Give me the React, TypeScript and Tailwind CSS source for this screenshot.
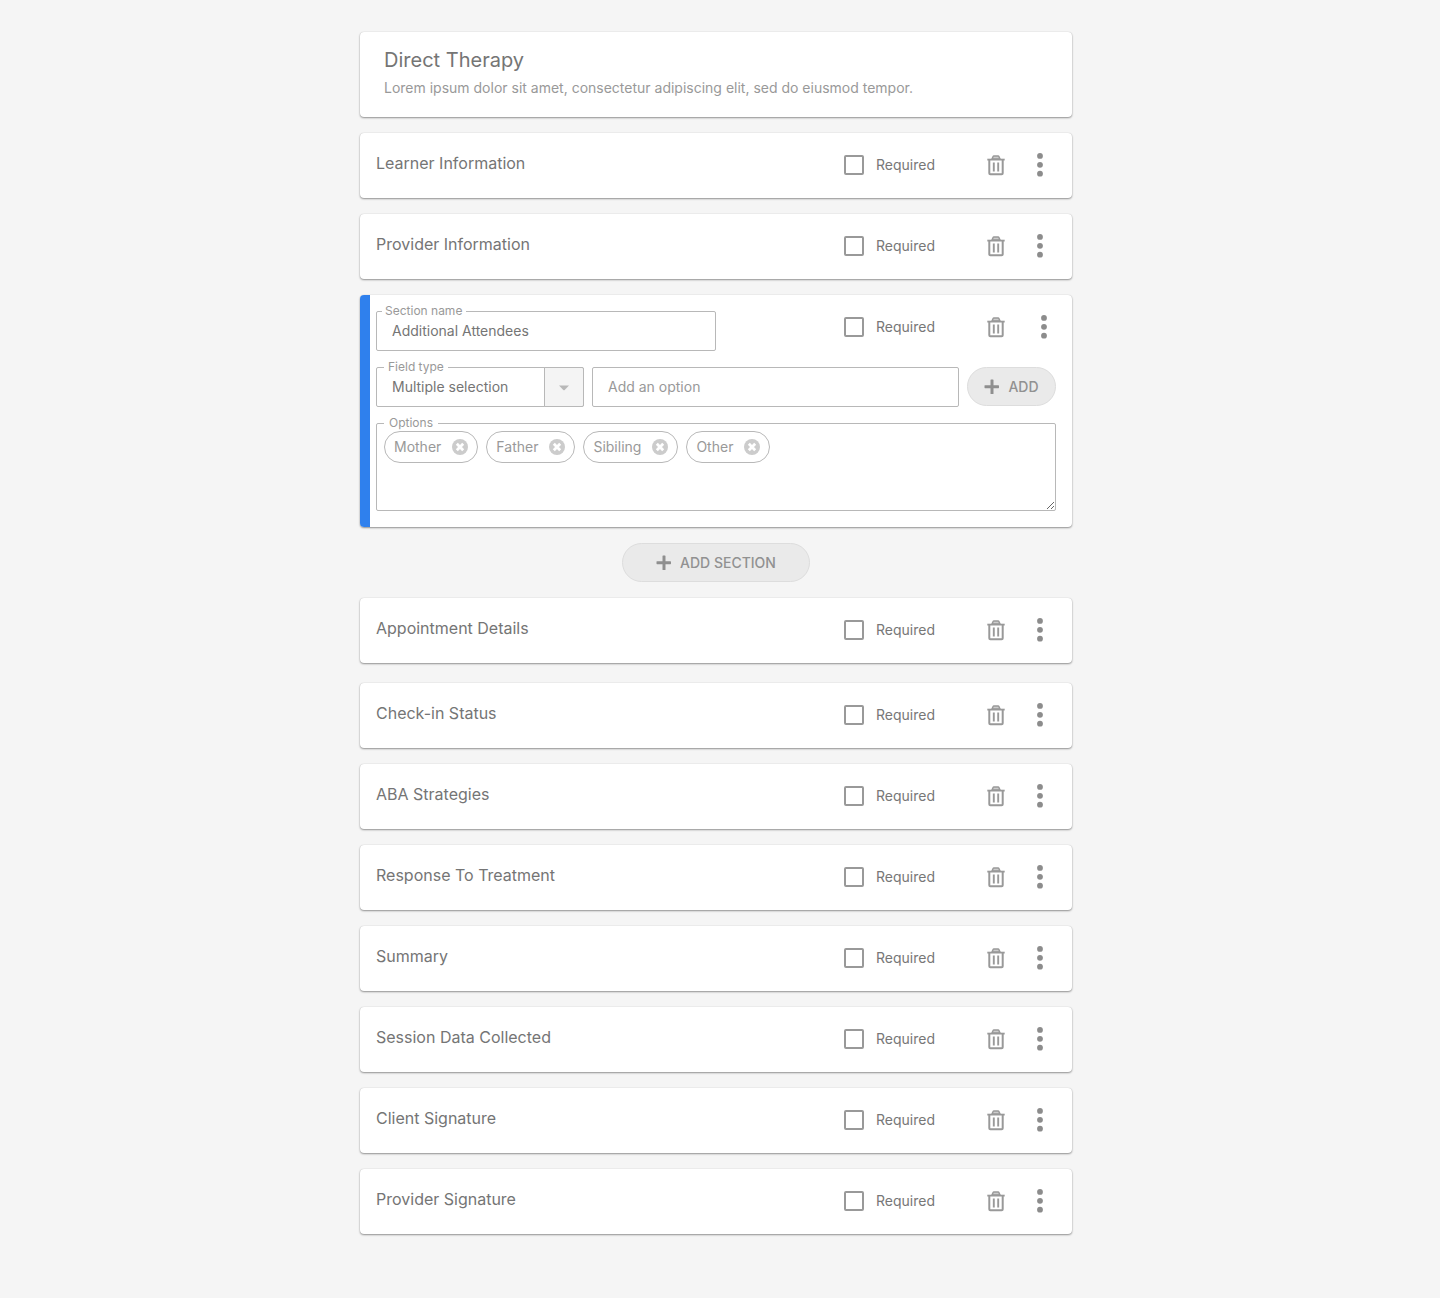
import { useState } from "react";

type SectionCardProps = {
  title: string;
};

const sectionsBefore = ["Learner Information", "Provider Information"];

const sectionsAfter = [
  "Check-in Status",
  "ABA Strategies",
  "Response To Treatment",
  "Summary",
  "Session Data Collected",
  "Client Signature",
  "Provider Signature",
];

function TrashIcon() {
  return (
    <svg viewBox="0 0 24 24" className="size-6" fill="none" stroke="#999999" aria-hidden="true">
      <path d="M8 6 9 3.8q.3-.7 1-.7h4q.7 0 1 .7L16 6z" fill="#cccccc" strokeWidth="1.5" />
      <path d="M3.3 6.6h17.4" strokeWidth="1.8" />
      <path d="M5.3 6.600v13.700q0 1 1 1h11.400q1 0 1-1V6.600" strokeWidth="2" />
      <path d="M9.800 9.400v9.200M14.200 9.400v9.200" strokeWidth="1.900" />
    </svg>
  );
}

function DotsIcon() {
  return (
    <svg viewBox="0 0 24 24" className="size-6" fill="#8c8c8c" aria-hidden="true">
      <circle cx="12" cy="2.900" r="2.900" />
      <circle cx="12" cy="11.800" r="2.900" />
      <circle cx="12" cy="20.700" r="2.900" />
    </svg>
  );
}

function PlusIcon() {
  return (
    <svg viewBox="0 0 16 16" className="size-4" fill="#8f8f8f" aria-hidden="true">
      <rect x="6.5" y="0.500" width="3" height="14.500" rx="0.600" />
      <rect x="0.500" y="6.200" width="14.500" height="3" rx="0.600" />
    </svg>
  );
}

function RemoveIcon() {
  return (
    <svg viewBox="0 0 16 16" className="size-4" aria-hidden="true">
      <circle cx="8" cy="8" r="8" fill="#cccccc" />
      <path d="m4.800 4.800 6.400 6.400M11.200 4.800l-6.400 6.400" stroke="#ffffff" strokeWidth="2.800" />
    </svg>
  );
}

function RequiredCheckbox() {
  return (
    <label className="flex w-[140px] items-center gap-3 text-sm text-[#777777]">
      <input
        type="checkbox"
        className="size-5 appearance-none rounded-xs border-2 border-[#999999] bg-white checked:bg-[#2f80ed]"
      />
      Required
    </label>
  );
}

function SectionCard({ title }: SectionCardProps) {
  return (
    <section className="flex min-h-[65px] items-start justify-between rounded bg-white py-4 pr-5 pl-4 shadow-[0_1px_2px_rgba(0,0,0,0.4),0_0_1px_rgba(0,0,0,0.2)]">
      <h2 className="text-base leading-7 text-[#757575]">{title}</h2>
      <div className="flex h-8 items-center">
        <RequiredCheckbox />
        <button type="button" aria-label={`Delete ${title}`} className="mr-5">
          <TrashIcon />
        </button>
        <button type="button" aria-label={`More actions for ${title}`}>
          <DotsIcon />
        </button>
      </div>
    </section>
  );
}

function SectionEditor() {
  const [options, setOptions] = useState(["Mother", "Father", "Sibiling", "Other"]);
  const [draft, setDraft] = useState("");

  const addOption = () => {
    if (!draft.trim()) return;
    setOptions([...options, draft.trim()]);
    setDraft("");
  };

  return (
    <section className="flex rounded bg-white shadow-[0_1px_2px_rgba(0,0,0,0.4),0_0_1px_rgba(0,0,0,0.2)]">
      <div className="w-2.5 shrink-0 rounded-l bg-[#2f80ed]" />
      <div className="flex grow flex-col gap-4 py-4 pr-4 pl-1.5">
        <div className="flex items-start justify-between">
          <div className="relative w-1/2">
            <label htmlFor="section-name" className="absolute -top-2 left-1.5 bg-white pr-1 pl-[3px] text-xs text-[#999999]">
              Section name
            </label>
            <input
              id="section-name"
              defaultValue="Additional Attendees"
              className="h-10 w-full rounded-xs border border-[#b8b8b8] px-[15px] pb-0.5 text-sm text-[#757575]"
            />
          </div>
          <div className="flex h-8 items-center">
            <RequiredCheckbox />
            <button type="button" aria-label="Delete section" className="mr-6">
              <TrashIcon />
            </button>
            <button type="button" aria-label="More section actions">
              <DotsIcon />
            </button>
          </div>
        </div>

        <div className="flex gap-2">
          <div className="relative w-52">
            <label htmlFor="field-type" className="absolute -top-2 left-2 bg-white px-1 text-xs text-[#999999]">
              Field type
            </label>
            <select
              id="field-type"
              className="h-10 w-full appearance-none rounded-xs border border-[#b8b8b8] px-[15px] text-sm text-[#757575]"
            >
              <option>Multiple selection</option>
              <option>Single selection</option>
              <option>Text</option>
            </select>
            <div className="pointer-events-none absolute inset-y-0 right-0 flex w-10 items-center justify-center rounded-r-xs border border-[#b8b8b8] bg-[#f4f4f4]">
              <svg viewBox="0 0 10 6" className="mt-0.5 h-1.5 w-2.5" fill="#b8b8b8" aria-hidden="true">
                <path d="M0 .5h10L5.700 5q-.7.600-1.400 0z" />
              </svg>
            </div>
          </div>
          <input
            aria-label="Add an option"
            placeholder="Add an option"
            value={draft}
            onChange={(e) => setDraft(e.target.value)}
            className="h-10 min-w-0 grow rounded-xs border border-[#b8b8b8] px-[15px] pb-0.5 text-sm text-[#757575] placeholder:text-[#999999]"
          />
          <button
            type="button"
            onClick={addOption}
            className="flex h-[39px] w-[89px] items-center justify-center gap-2 rounded-full border border-[#dddddd] bg-[#eaeaea] text-sm font-medium text-[#919191]"
          >
            <PlusIcon />
            ADD
          </button>
        </div>

        <div className="relative">
          <span id="options-label" className="absolute -top-2 left-2 bg-white px-[5px] text-xs text-[#999999]">
            Options
          </span>
          <ul
            aria-labelledby="options-label"
            className="flex h-[88px] resize-y flex-wrap content-start gap-2 overflow-auto rounded-xs border border-[#b8b8b8] p-[7px]"
          >
            {options.map((option) => (
              <li
                key={option}
                className="flex h-8 items-center gap-[11px] rounded-full border border-[#b8b8b8] px-[9px] text-sm text-[#999999]"
              >
                {option}
                <button
                  type="button"
                  aria-label={`Remove ${option}`}
                  onClick={() => setOptions(options.filter((o) => o !== option))}
                >
                  <RemoveIcon />
                </button>
              </li>
            ))}
          </ul>
        </div>
      </div>
    </section>
  );
}

export default function App() {
  return (
    <main className="min-h-screen bg-[#f5f5f5] pt-8 pr-6 pb-16 pl-4 font-['Inter',sans-serif]">
      <div className="mx-auto flex max-w-[712px] flex-col gap-4">
        <header className="rounded bg-white px-6 pt-3.5 pb-[19px] shadow-[0_1px_2px_rgba(0,0,0,0.4),0_0_1px_rgba(0,0,0,0.2)]">
          <h1 className="text-xl text-[#757575]">Direct Therapy</h1>
          <p className="mt-1 text-sm text-[#999999]">
            Lorem ipsum dolor sit amet, consectetur adipiscing elit, sed do eiusmod tempor.
          </p>
        </header>

        {sectionsBefore.map((title) => (
          <SectionCard key={title} title={title} />
        ))}

        <SectionEditor />

        <button
          type="button"
          className="flex h-[39px] w-[188px] items-center justify-center gap-2 self-center rounded-full border border-[#dddddd] bg-[#eaeaea] text-sm font-medium text-[#919191]"
        >
          <PlusIcon />
          ADD SECTION
        </button>

        <div className="mb-1">
          <SectionCard title="Appointment Details" />
        </div>

        {sectionsAfter.map((title) => (
          <SectionCard key={title} title={title} />
        ))}
      </div>
    </main>
  );
}
